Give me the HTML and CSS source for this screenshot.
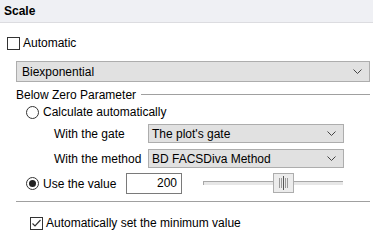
FILE: index.html
```html
<!DOCTYPE html>
<html lang="en">
<head>
  <meta charset="UTF-8">
  <title>Scale</title>
  <link rel="stylesheet" href="styles.css">
</head>
<body>

  <div class="header">Scale</div>

  <div class="panel">
    <!-- Automatic -->
    <div class="check-row auto-row">
      <span class="checkbox"></span>
      <span>Automatic</span>
    </div>

    <div class="combo wide">
      <span>Biexponential</span>
      <svg class="chev" width="9" height="6" viewBox="0 0 9 6"><path d="M0.5 0.5 L4.5 4.5 L8.5 0.5" fill="none" stroke="#444" stroke-width="1"/></svg>
    </div>

    <!-- Below zero -->
    <div class="group-title">
      <span>Below Zero Parameter</span>
      <span class="rule"></span>
    </div>

    <div class="radio-row calc-row">
      <span class="radio"></span>
      <span>Calculate automatically</span>
    </div>

    <div class="field-row gate-row">
      <span class="field-label">With the gate</span>
      <div class="combo small">
        <span>The plot's gate</span>
        <svg class="chev" width="9" height="6" viewBox="0 0 9 6"><path d="M0.5 0.5 L4.5 4.5 L8.5 0.5" fill="none" stroke="#444" stroke-width="1"/></svg>
      </div>
    </div>

    <div class="field-row method-row">
      <span class="field-label">With the method</span>
      <div class="combo small">
        <span>BD FACSDiva Method</span>
        <svg class="chev" width="9" height="6" viewBox="0 0 9 6"><path d="M0.5 0.5 L4.5 4.5 L8.5 0.5" fill="none" stroke="#444" stroke-width="1"/></svg>
      </div>
    </div>

    <div class="radio-row value-row">
      <span class="radio checked"></span>
      <span class="value-label">Use the value</span>
      <div class="textbox">200</div>
      <div class="slider">
        <div class="track"></div>
        <svg class="thumb" width="21" height="20" viewBox="0 0 21 20">
          <rect x="0.5" y="0.5" width="20" height="19" fill="#ececec" stroke="#adadad"/>
          <path d="M6.5 5 V15 M8.5 5 V15 M12.5 5 V15 M14.5 5 V15" stroke="#9a9a9a" stroke-width="1"/>
          <path d="M10.5 3 V17" stroke="#555" stroke-width="1"/>
        </svg>
      </div>
    </div>

    <div class="separator"></div>

    <div class="check-row min-row">
      <span class="checkbox">
        <svg width="11" height="11" viewBox="0 0 11 11"><path d="M1.5 5.5 L4 8 L9.5 2" fill="none" stroke="#333" stroke-width="1.2"/></svg>
      </span>
      <span>Automatically set the minimum value</span>
    </div>
  </div>

</body>
</html>
```

FILE: styles.css
```css
body {
  margin: 0;
  background: #fff;
  font-family: 'Liberation Sans', Arial, sans-serif;
  font-size: 12px;
  color: #000;
  width: 373px;
}

.header {
  height: 22px;
  line-height: 22px;
  padding-left: 4px;
  background: #eff0f4;
  border-bottom: 1px solid #dcdce0;
  font-weight: bold;
}

.panel {
  padding-right: 3px;
}

.check-row,
.radio-row,
.field-row,
.group-title {
  display: flex;
  align-items: center;
}

.checkbox {
  width: 11px;
  height: 11px;
  border: 1px solid #333;
  margin-right: 3px;
  display: flex;
  align-items: center;
  justify-content: center;
  flex: none;
}

.auto-row {
  height: 18px;
  margin-top: 11px;
  padding-left: 7px;
}

.combo {
  display: flex;
  align-items: center;
  justify-content: space-between;
  background: #e1e1e1;
  border: 1px solid #adadad;
  padding: 0 7px 0 5px;
  box-sizing: border-box;
}

.combo.wide {
  margin: 9px 0 0 16px;
  height: 21px;
}

.group-title {
  margin: 5px 0 0 16px;
  height: 16px;
}

.rule {
  flex: 1;
  height: 1px;
  background: #a0a0a0;
  margin: 0 0 2px 5px;
}

.radio {
  width: 11px;
  height: 11px;
  border: 1px solid #333;
  border-radius: 50%;
  margin-right: 4px;
  position: relative;
  flex: none;
}

.radio.checked::after {
  content: "";
  position: absolute;
  left: 2px;
  top: 2px;
  width: 7px;
  height: 7px;
  border-radius: 50%;
  background: #222;
}

.calc-row {
  height: 16px;
  margin-top: 1px;
  padding-left: 26px;
}

.field-row {
  padding-left: 54px;
}

.field-label {
  width: 94px;
}

.combo.small {
  width: 196px;
  height: 19px;
  padding-left: 3px;
}

.gate-row {
  margin-top: 4px;
}

.method-row {
  margin-top: 6px;
}

.value-row {
  margin-top: 5px;
  padding-left: 26px;
  height: 21px;
}

.value-label {
  width: 83px;
}

.textbox {
  width: 56px;
  height: 21px;
  box-sizing: border-box;
  border: 1px solid #7a7a7a;
  text-align: right;
  padding-right: 4px;
  line-height: 19px;
}

.slider {
  margin-left: 21px;
  width: 140px;
  height: 21px;
  position: relative;
}

.track {
  margin-top: 8px;
  height: 3px;
  background: #e7e7e7;
  border-top: 1px solid #a8a8a8;
  border-left: 1px solid #a8a8a8;
}

.thumb {
  position: absolute;
  left: 70px;
  top: 0;
}

.separator {
  margin: 7px 0 0 16px;
  height: 1px;
  background: #a0a0a0;
}

.min-row {
  margin-top: 14px;
  padding-left: 30px;
  height: 14px;
}
```
